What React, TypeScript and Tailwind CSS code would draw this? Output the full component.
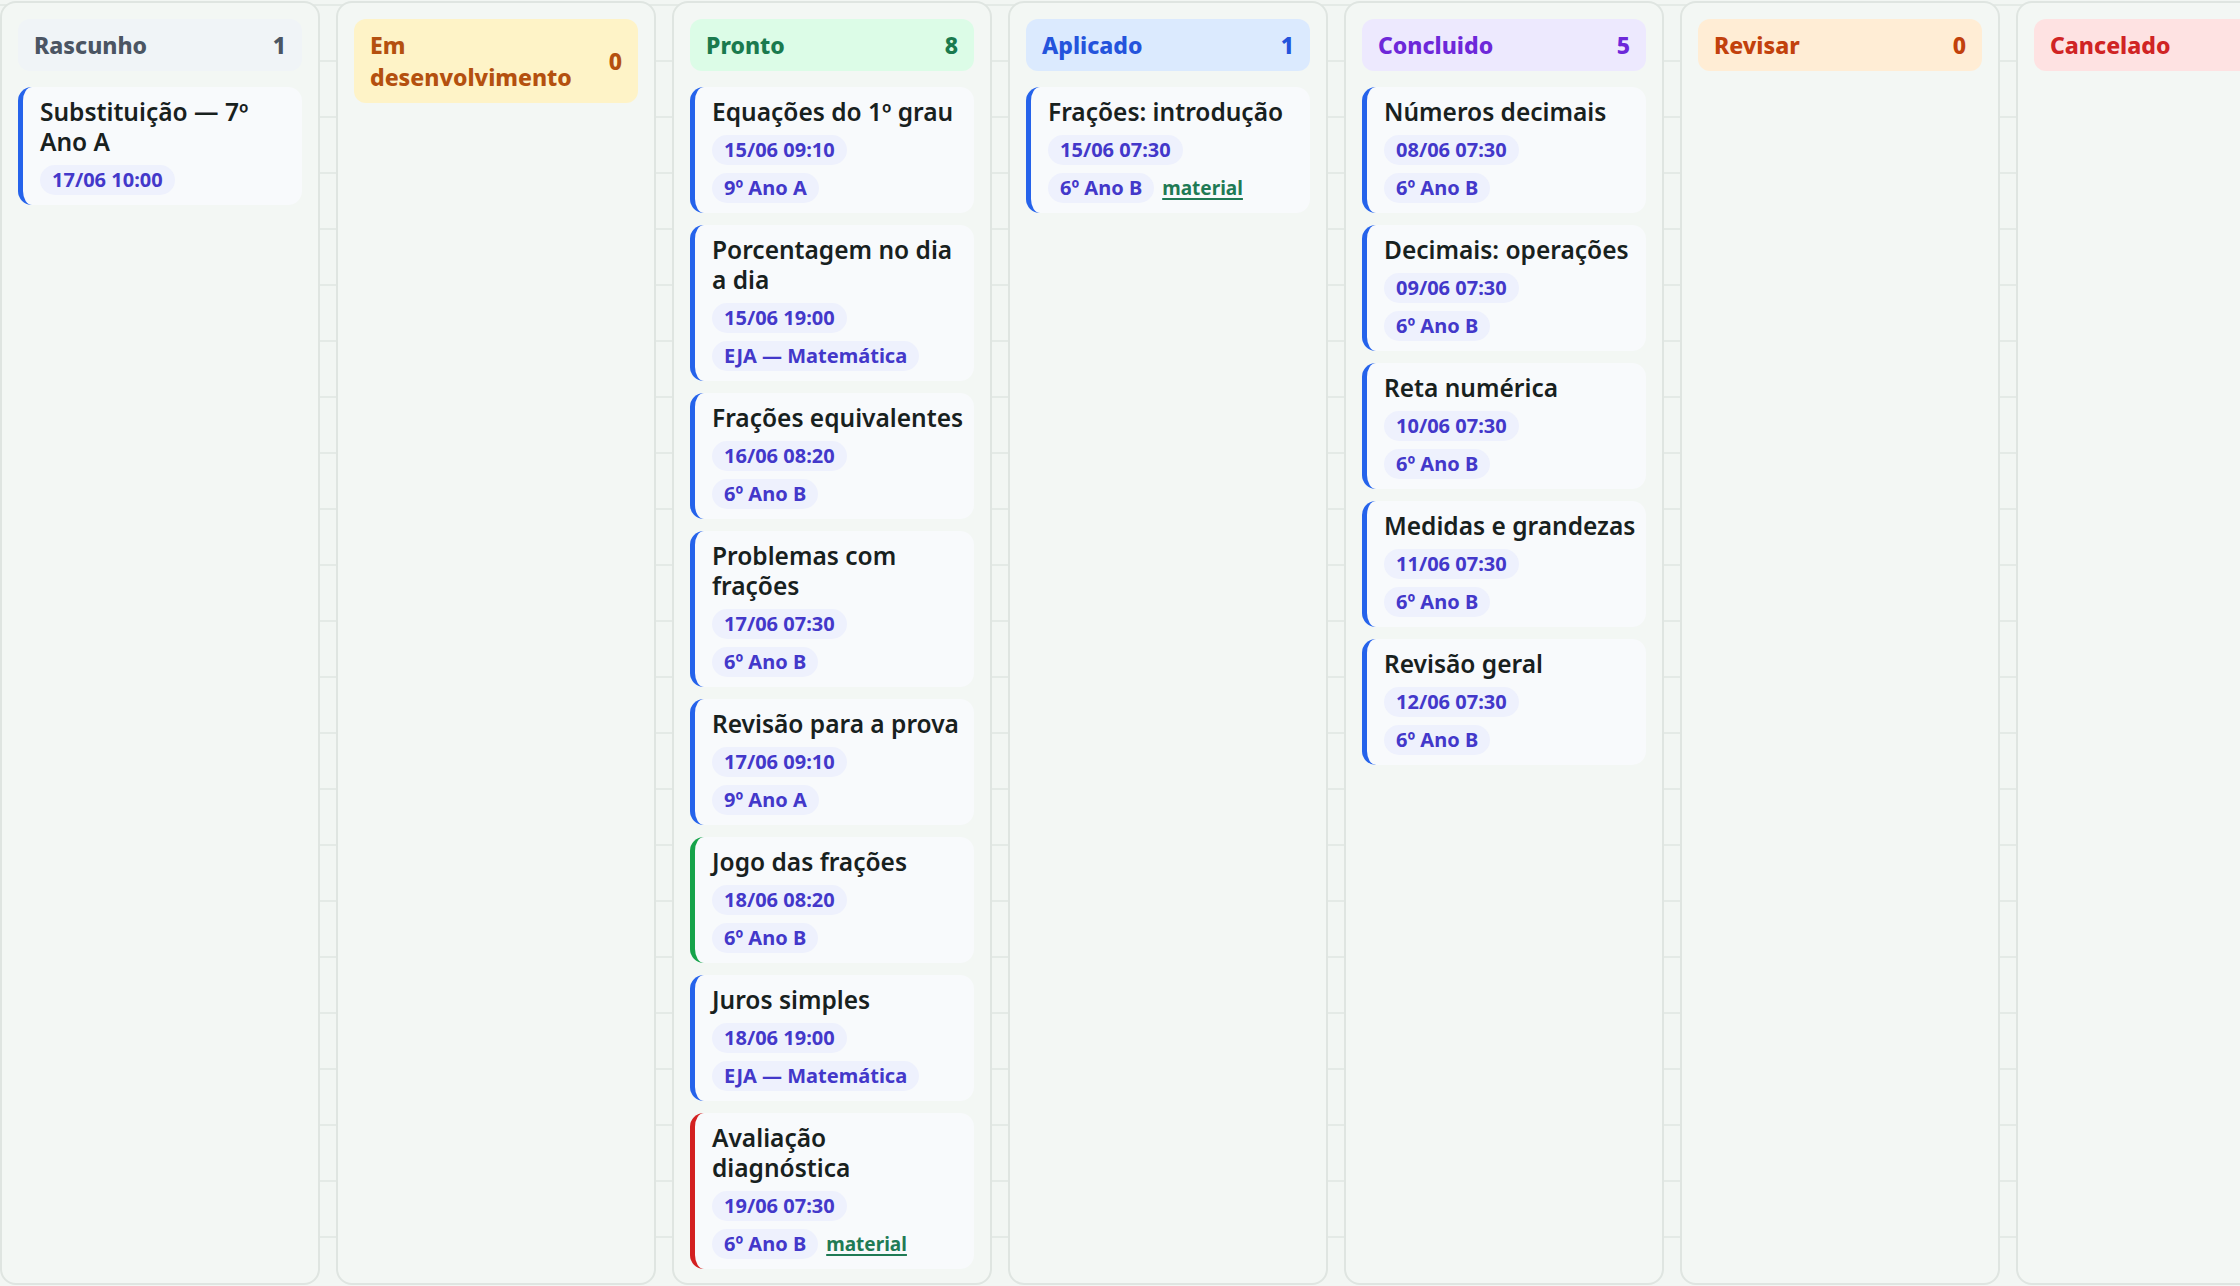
import React from "react";

type Card = {
  title: string;
  date: string;
  group?: string;
  material?: boolean;
  accent?: "blue" | "green" | "red";
};

type Column = {
  title: string;
  count: number;
  headerBg: string;
  headerText: string;
  cards: Card[];
};

const columns: Column[] = [
  {
    title: "Rascunho",
    count: 1,
    headerBg: "bg-[#f0f4f7]",
    headerText: "text-[#4b5563]",
    cards: [{ title: "Substituição — 7º Ano A", date: "17/06 10:00" }],
  },
  {
    title: "Em desenvolvimento",
    count: 0,
    headerBg: "bg-[#fef3c7]",
    headerText: "text-[#b4500f]",
    cards: [],
  },
  {
    title: "Pronto",
    count: 8,
    headerBg: "bg-[#dcfce7]",
    headerText: "text-[#1a7a4e]",
    cards: [
      { title: "Equações do 1º grau", date: "15/06 09:10", group: "9º Ano A" },
      { title: "Porcentagem no dia a dia", date: "15/06 19:00", group: "EJA — Matemática" },
      { title: "Frações equivalentes", date: "16/06 08:20", group: "6º Ano B" },
      { title: "Problemas com frações", date: "17/06 07:30", group: "6º Ano B" },
      { title: "Revisão para a prova", date: "17/06 09:10", group: "9º Ano A" },
      { title: "Jogo das frações", date: "18/06 08:20", group: "6º Ano B", accent: "green" },
      { title: "Juros simples", date: "18/06 19:00", group: "EJA — Matemática" },
      { title: "Avaliação diagnóstica", date: "19/06 07:30", group: "6º Ano B", material: true, accent: "red" },
    ],
  },
  {
    title: "Aplicado",
    count: 1,
    headerBg: "bg-[#dbeafe]",
    headerText: "text-[#2454dc]",
    cards: [{ title: "Frações: introdução", date: "15/06 07:30", group: "6º Ano B", material: true }],
  },
  {
    title: "Concluido",
    count: 5,
    headerBg: "bg-[#ede9fe]",
    headerText: "text-[#6d28d9]",
    cards: [
      { title: "Números decimais", date: "08/06 07:30", group: "6º Ano B" },
      { title: "Decimais: operações", date: "09/06 07:30", group: "6º Ano B" },
      { title: "Reta numérica", date: "10/06 07:30", group: "6º Ano B" },
      { title: "Medidas e grandezas", date: "11/06 07:30", group: "6º Ano B" },
      { title: "Revisão geral", date: "12/06 07:30", group: "6º Ano B" },
    ],
  },
  {
    title: "Revisar",
    count: 0,
    headerBg: "bg-[#ffedd5]",
    headerText: "text-[#c2410c]",
    cards: [],
  },
  {
    title: "Cancelado",
    count: 0,
    headerBg: "bg-[#fee2e2]",
    headerText: "text-[#d02424]",
    cards: [],
  },
];

const accentClass: Record<string, string> = {
  blue: "border-l-[#2563eb]",
  green: "border-l-[#16a34a]",
  red: "border-l-[#d32020]",
};

function Pill({ children }: { children: React.ReactNode }) {
  return (
    <span className="inline-flex h-[30px] items-center rounded-full bg-[#eef1fd] px-[12px] text-[20px] font-bold leading-none text-[#4338ca]">
      {children}
    </span>
  );
}

function TaskCard({ card }: { card: Card }) {
  return (
    <div
      className={`rounded-[14px] border-l-[5px] bg-[#f8fafc] pb-[10px] pl-[17px] pr-[10px] pt-[10px] ${accentClass[card.accent ?? "blue"]}`}
    >
      <div className="text-[24.5px] font-semibold leading-[30px] text-[#18211e]">{card.title}</div>
      <div className="mt-[8px] flex flex-col items-start gap-[8px]">
        <Pill>{card.date}</Pill>
        {card.group && (
          <div className="flex items-center gap-[8px]">
            <Pill>{card.group}</Pill>
            {card.material && (
              <span className="text-[19px] font-bold leading-none text-[#1f7a55] underline decoration-2 underline-offset-[3px]">
                material
              </span>
            )}
          </div>
        )}
      </div>
    </div>
  );
}

function BoardColumn({ col }: { col: Column }) {
  return (
    <div className="flex h-[1284px] w-[320px] shrink-0 flex-col gap-[16px] rounded-[16px] border-2 border-[#dfe5e1] bg-[#f3f7f4] p-[16px]">
      <div
        className={`flex items-center justify-between gap-[12px] rounded-[12px] px-[16px] py-[10px] text-[23px] font-extrabold leading-[32px] ${col.headerBg} ${col.headerText}`}
      >
        <span className={col.title === "Em desenvolvimento" ? "max-w-[200px]" : ""}>{col.title}</span>
        <span>{col.count}</span>
      </div>
      <div className="flex flex-col gap-[12px]">
        {col.cards.map((c, i) => (
          <TaskCard key={i} card={c} />
        ))}
      </div>
    </div>
  );
}

export default function App() {
  return (
    <div
      className="h-screen w-screen overflow-hidden bg-[#f2f6f3] bg-[linear-gradient(to_bottom,#e4eae6_2px,transparent_2px)] bg-[size:100%_56px] bg-[position:0_4px]"
      style={{ fontFamily: '"Segoe UI", "Noto Sans", sans-serif' }}
    >
      <div className="flex gap-[16px] pt-px">
        {columns.map((col) => (
          <BoardColumn key={col.title} col={col} />
        ))}
      </div>
    </div>
  );
}
